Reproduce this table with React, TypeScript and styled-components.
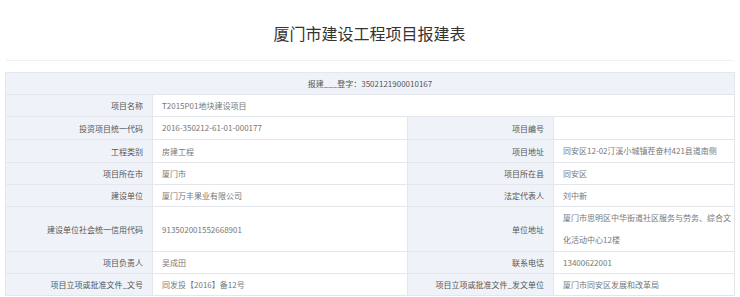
import React from "react";
import styled, { createGlobalStyle } from "styled-components";

const GlobalStyle = createGlobalStyle`
  body {
    margin: 0;
    background: #fff;
    font-family: "Noto Sans CJK SC", "Noto Sans", sans-serif;
  }
`;

interface Field {
  label: string;
  value: string;
}

// rows with one field span the whole width, rows with two are split
const rows: Field[][] = [
  [{ label: "项目名称", value: "T2015P01地块建设项目" }],
  [
    { label: "投资项目统一代码", value: "2016-350212-61-01-000177" },
    { label: "项目编号", value: "" },
  ],
  [
    { label: "工程类别", value: "房建工程" },
    { label: "项目地址", value: "同安区12-02汀溪小城镇茬奋村421县道南侧" },
  ],
  [
    { label: "项目所在市", value: "厦门市" },
    { label: "项目所在县", value: "同安区" },
  ],
  [
    { label: "建设单位", value: "厦门万丰果业有限公司" },
    { label: "法定代表人", value: "刘中新" },
  ],
  [
    { label: "建设单位社会统一信用代码", value: "913502001552668901" },
    {
      label: "单位地址",
      value: "厦门市思明区中华街道社区服务与劳务、综合文化活动中心12楼",
    },
  ],
  [
    { label: "项目负责人", value: "吴成田" },
    { label: "联系电话", value: "13400622001" },
  ],
  [
    { label: "项目立项或批准文件_文号", value: "同发投【2016】备12号" },
    { label: "项目立项或批准文件_发文单位", value: "厦门市同安区发展和改革局" },
  ],
];

const App: React.FC = () => {
  return (
    <Page>
      <GlobalStyle />
      <Title>厦门市建设工程项目报建表</Title>

      <Table>
        <colgroup>
          <Col $w={147} />
          <Col $w={255} />
          <Col $w={146} />
          <Col $w={181} />
        </colgroup>
        <tbody>
          <tr>
            <HeadCell colSpan={4}>报建___登字：3502121900010167</HeadCell>
          </tr>
          {rows.map((row, i) => (
            <tr key={i}>
              {row.map((f, j) => (
                <React.Fragment key={j}>
                  <Label>{f.label}</Label>
                  <Value
                    colSpan={row.length === 1 ? 3 : 1}
                    $long={f.value.length > 21}
                  >
                    {f.value}
                  </Value>
                </React.Fragment>
              ))}
            </tr>
          ))}
        </tbody>
      </Table>
    </Page>
  );
};

const Page = styled.div`
  padding: 0 6px 0 5px;
`;

const Title = styled.h1`
  margin: 0 1px 0 1px;
  padding: 20px 0 14px;
  line-height: 26px;
  font-size: 16px;
  font-weight: 400;
  color: #333;
  text-align: center;
  border-bottom: 1px solid #eef0f2;
`;

const Table = styled.table`
  margin-top: 11px;
  width: 729px;
  table-layout: fixed;
  border-collapse: collapse;
  border: 1px solid #e3e6ea;
  font-size: 8px;
`;

const Col = styled.col<{ $w: number }>`
  width: ${(p) => p.$w}px;
`;

const Cell = styled.td`
  height: 21px;
  padding: 0;
  line-height: 21px;
  border: 1px solid #e3e6ea;
  vertical-align: middle;
`;

const HeadCell = styled(Cell)`
  background: #eff3f9;
  color: #555;
  text-align: center;
`;

const Label = styled(Cell)`
  background: #eff3f9;
  color: #555;
  text-align: right;
  padding-right: 9px;
  white-space: nowrap;
`;

const Value = styled(Cell)<{ $long?: boolean }>`
  background: #fff;
  color: #777;
  text-align: left;
  padding: 0 0 0 9px;
  line-height: ${(p) => (p.$long ? "22px" : "21px")};
`;

export default App;
